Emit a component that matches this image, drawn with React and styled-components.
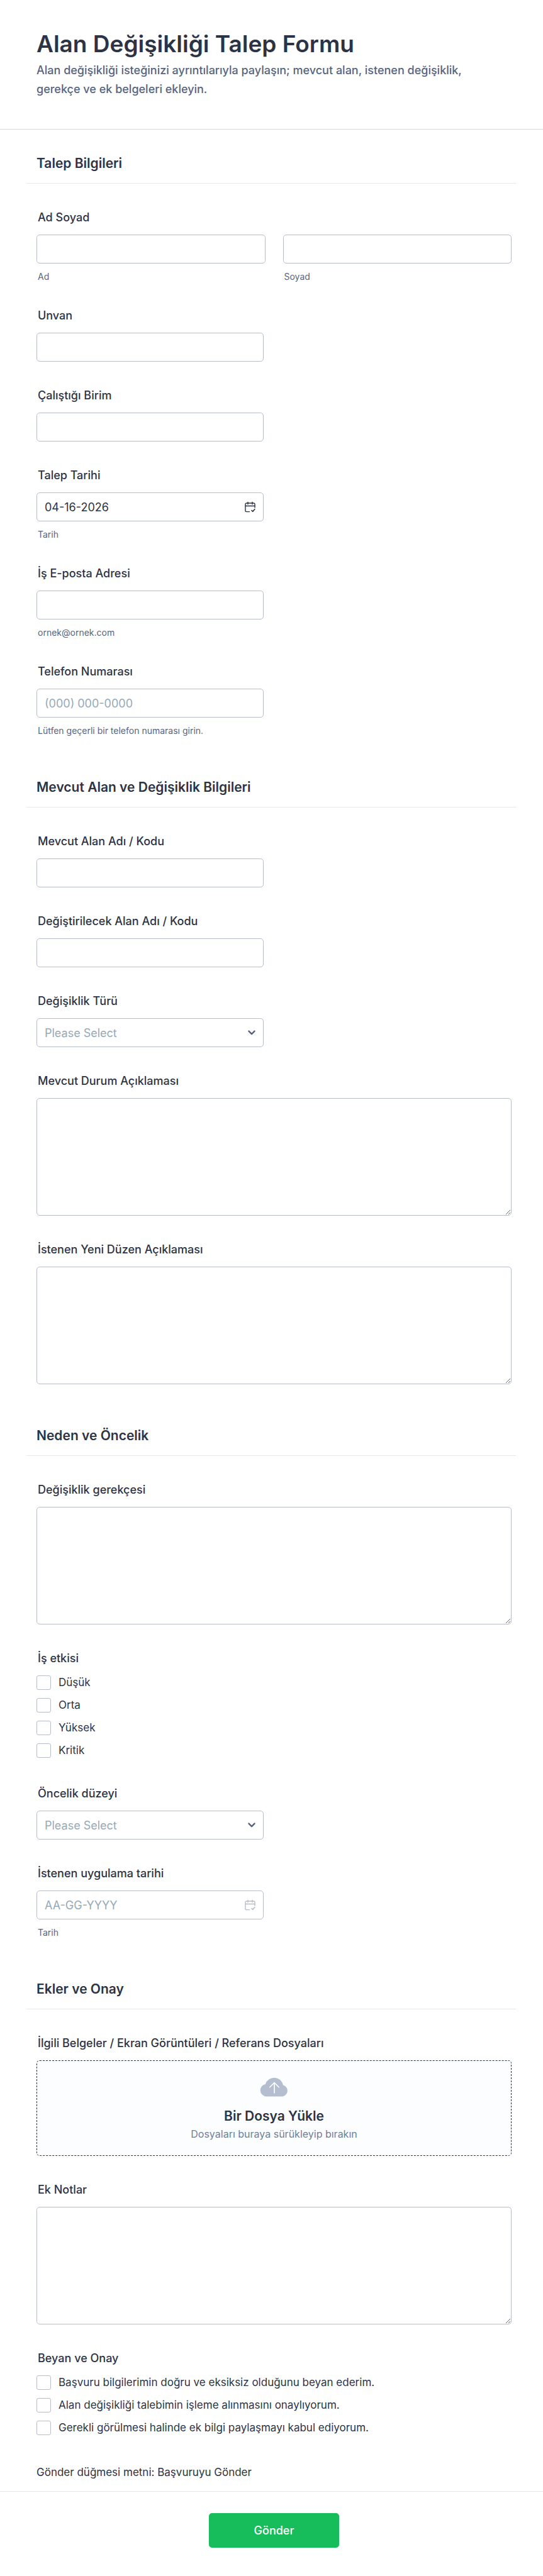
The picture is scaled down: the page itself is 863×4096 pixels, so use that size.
import React, { useState } from 'react';
import styled, { createGlobalStyle } from 'styled-components';

const GlobalStyle = createGlobalStyle`
  *, *::before, *::after {
    box-sizing: border-box;
  }
  body {
    margin: 0;
    background: #fff;
    color: #2c3345;
    font-family: Inter, "Liberation Sans", sans-serif;
  }
`;

const CalendarIcon = () => (
  <svg width="17" height="17" viewBox="0 0 17 17" fill="none" stroke="currentColor" strokeWidth="1.4" strokeLinecap="round" strokeLinejoin="round">
    <path d="M16 9.500V4.500a2 2 0 0 0-2-2H3a2 2 0 0 0-2 2v9.800a2 2 0 0 0 2 2h4.500" />
    <path d="M1 7h15M5 .8v3.400M12 .8v3.400" />
    <path d="M11 14.200l1.800 1.600 3-3.600" strokeWidth="1.700" />
  </svg>
);

const ChevronIcon = () => (
  <svg width="12" height="8" viewBox="0 0 12 8" fill="none" stroke="#57647e" strokeWidth="2.4" strokeLinecap="round" strokeLinejoin="round">
    <path d="M1.500 1.600 6 6.200l4.500-4.600" />
  </svg>
);

const CloudIcon = () => (
  <svg width="45" height="32" viewBox="0 0 45 32" fill="none">
    <path d="M10 31.500A9.900 9.900 0 0 1 8.800 11.900 14.600 14.600 0 0 1 37 13.500 9.200 9.200 0 0 1 36 31.500Z" fill="#b4bece" />
    <path d="M23 26V9.500M15.800 16.800 23 9.500l7.200 7.300" stroke="#fff" strokeWidth="1.600" strokeLinecap="round" strokeLinejoin="round" />
  </svg>
);

const Header = styled.header`
  padding: 47px 100px 48px 58px;
  border-bottom: 1px solid #d7d8e1;
`;

const Title = styled.h1`
  margin: 0 0 4px;
  font-size: 37px;
  line-height: 46px;
  font-weight: 600;
`;

const Subtitle = styled.p`
  margin: 0;
  font-size: 18px;
  line-height: 30px;
  font-weight: 500;
  color: #57647e;
`;

const Fields = styled.div`
  display: flex;
  flex-direction: column;
  gap: 42px;
  padding: 14px 50px 16px 58px;
`;

const SectionTitle = styled.h2`
  margin: 0 -7px 0 -16px;
  padding: 27px 16px 18px;
  border-bottom: 1px solid #e6e7ef;
  font-size: 21px;
  line-height: 26px;
  font-weight: 600;
`;

const FieldBox = styled.div`
  min-width: 0;
  margin: 0;
  padding: 0;
  border: 0;
`;

const Label = styled.label`
  display: block;
  margin-bottom: 15px;
  padding: 0 2px;
  font-size: 18px;
  line-height: 24px;
  font-weight: 500;
`;

const SubLabel = styled.label`
  display: block;
  margin-top: 13px;
  padding: 0 2px;
  font-size: 14px;
  line-height: 16px;
  color: #57647e;
`;

const NameGrid = styled.div`
  display: grid;
  grid-template-columns: 1fr 1fr;
  gap: 28px;
`;

const ControlWrap = styled.div`
  position: relative;
  max-width: 361px;
  color: ${(p) => (p.$muted ? '#b8bdc9' : '#2c3345')};

  svg {
    position: absolute;
    right: 13px;
    top: 50%;
    transform: translateY(-50%);
    pointer-events: none;
  }
`;

const Input = styled.input`
  display: block;
  width: 100%;
  height: 46px;
  padding: 0 12px;
  border: 1px solid #b8bdc9;
  border-radius: 5px;
  background: #fff;
  color: #2c3345;
  font-family: inherit;
  font-size: 18px;
  &:focus {
    outline: none;
    border-color: #0099ff;
  }
  &::placeholder {
    color: #95a9b8;
    opacity: 1;
  }
`;

const Select = styled(Input).attrs({ as: 'select' })`
  appearance: none;
  color: #95a9b8;
`;

const TextArea = styled(Input).attrs({ as: 'textarea' })`
  height: 187px;
  padding: 12px;
  resize: vertical;
`;

const Options = styled.div`
  display: flex;
  flex-direction: column;
  gap: 13px;
  padding: 0 0 3px;
`;

const Option = styled.label`
  display: flex;
  align-items: center;
  gap: 12px;
  font-size: 17px;
  line-height: 23px;
`;

const Checkbox = styled.input`
  appearance: none;
  flex: none;
  width: 23px;
  height: 23px;
  margin: 0;
  border: 1px solid #b8bdc9;
  border-radius: 3px;
  background: #fff;
  &:checked {
    border-color: #0099ff;
    background: #0099ff;
  }
`;

const DropZone = styled.button`
  display: flex;
  flex-direction: column;
  align-items: center;
  width: 100%;
  padding: 25px 12px 24px;
  border: 1px dashed #2c3345;
  border-radius: 5px;
  background: #fbfdff;
  color: #2c3345;
  font-family: inherit;
`;

const DropTitle = styled.span`
  margin-top: 17px;
  font-size: 21px;
  line-height: 28px;
  font-weight: 600;
`;

const DropHint = styled.span`
  padding-top: 4px;
  font-size: 16px;
  line-height: 20px;
  color: #6f7f96;
`;

const Note = styled.p`
  margin: 0;
  font-size: 17px;
  line-height: 28px;
`;

const Footer = styled.footer`
  display: flex;
  justify-content: center;
  padding: 34px 50px 45px 58px;
  border-top: 1px solid #e6e7ef;
`;

const SubmitButton = styled.button`
  width: 207px;
  height: 55px;
  border: 0;
  border-radius: 5px;
  background: #18bd5b;
  color: #fff;
  font-family: inherit;
  font-size: 18px;
  font-weight: 500;
  cursor: pointer;
`;

function TextField({ id, label, sub, icon, muted, ...rest }) {
  return (
    <FieldBox>
      <Label htmlFor={id}>{label}</Label>
      <ControlWrap $muted={muted}>
        <Input id={id} type="text" {...rest} />
        {icon}
      </ControlWrap>
      {sub && <SubLabel htmlFor={id}>{sub}</SubLabel>}
    </FieldBox>
  );
}

function SelectField({ id, label }) {
  return (
    <FieldBox>
      <Label htmlFor={id}>{label}</Label>
      <ControlWrap>
        <Select id={id} defaultValue="">
          <option value="">Please Select</option>
        </Select>
        <ChevronIcon />
      </ControlWrap>
    </FieldBox>
  );
}

function AreaField({ id, label }) {
  return (
    <FieldBox>
      <Label htmlFor={id}>{label}</Label>
      <TextArea id={id} />
    </FieldBox>
  );
}

function CheckGroup({ label, options }) {
  return (
    <FieldBox as="fieldset">
      <Label as="legend">{label}</Label>
      <Options>
        {options.map((o) => (
          <Option key={o}>
            <Checkbox type="checkbox" value={o} />
            {o}
          </Option>
        ))}
      </Options>
    </FieldBox>
  );
}

export default function App() {
  const [date, setDate] = useState('04-16-2026');

  return (
    <form onSubmit={(e) => e.preventDefault()} lang="tr">
      <GlobalStyle />
      <Header>
        <Title>Alan Değişikliği Talep Formu</Title>
        <Subtitle>Alan değişikliği isteğinizi ayrıntılarıyla paylaşın; mevcut alan, istenen değişiklik, gerekçe ve ek belgeleri ekleyin.</Subtitle>
      </Header>
      <Fields>
        <SectionTitle>Talep Bilgileri</SectionTitle>
        <FieldBox>
          <Label htmlFor="ad">Ad Soyad</Label>
          <NameGrid>
            <div>
              <Input id="ad" type="text" />
              <SubLabel htmlFor="ad">Ad</SubLabel>
            </div>
            <div>
              <Input id="soyad" type="text" />
              <SubLabel htmlFor="soyad">Soyad</SubLabel>
            </div>
          </NameGrid>
        </FieldBox>
        <TextField id="unvan" label="Unvan" />
        <TextField id="birim" label="Çalıştığı Birim" />
        <TextField id="talep-tarihi" label="Talep Tarihi" sub="Tarih" icon={<CalendarIcon />} value={date} onChange={(e) => setDate(e.target.value)} />
        <TextField id="eposta" label="İş E-posta Adresi" sub="ornek@ornek.com" type="email" />
        <TextField id="telefon" label="Telefon Numarası" sub="Lütfen geçerli bir telefon numarası girin." type="tel" placeholder="(000) 000-0000" />

        <SectionTitle>Mevcut Alan ve Değişiklik Bilgileri</SectionTitle>
        <TextField id="mevcut-alan" label="Mevcut Alan Adı / Kodu" />
        <TextField id="yeni-alan" label="Değiştirilecek Alan Adı / Kodu" />
        <SelectField id="tur" label="Değişiklik Türü" />
        <AreaField id="mevcut-durum" label="Mevcut Durum Açıklaması" />
        <AreaField id="yeni-duzen" label="İstenen Yeni Düzen Açıklaması" />

        <SectionTitle>Neden ve Öncelik</SectionTitle>
        <AreaField id="gerekce" label="Değişiklik gerekçesi" />
        <CheckGroup label="İş etkisi" options={['Düşük', 'Orta', 'Yüksek', 'Kritik']} />
        <SelectField id="oncelik" label="Öncelik düzeyi" />
        <TextField id="uygulama-tarihi" label="İstenen uygulama tarihi" sub="Tarih" icon={<CalendarIcon />} muted placeholder="AA-GG-YYYY" />

        <SectionTitle>Ekler ve Onay</SectionTitle>
        <FieldBox>
          <Label htmlFor="dosya">İlgili Belgeler / Ekran Görüntüleri / Referans Dosyaları</Label>
          <DropZone id="dosya" type="button">
            <CloudIcon />
            <DropTitle>Bir Dosya Yükle</DropTitle>
            <DropHint>Dosyaları buraya sürükleyip bırakın</DropHint>
          </DropZone>
        </FieldBox>
        <AreaField id="notlar" label="Ek Notlar" />
        <CheckGroup
          label="Beyan ve Onay"
          options={[
            'Başvuru bilgilerimin doğru ve eksiksiz olduğunu beyan ederim.',
            'Alan değişikliği talebimin işleme alınmasını onaylıyorum.',
            'Gerekli görülmesi halinde ek bilgi paylaşmayı kabul ediyorum.',
          ]}
        />
        <Note>Gönder düğmesi metni: Başvuruyu Gönder</Note>
      </Fields>
      <Footer>
        <SubmitButton type="submit">Gönder</SubmitButton>
      </Footer>
    </form>
  );
}
